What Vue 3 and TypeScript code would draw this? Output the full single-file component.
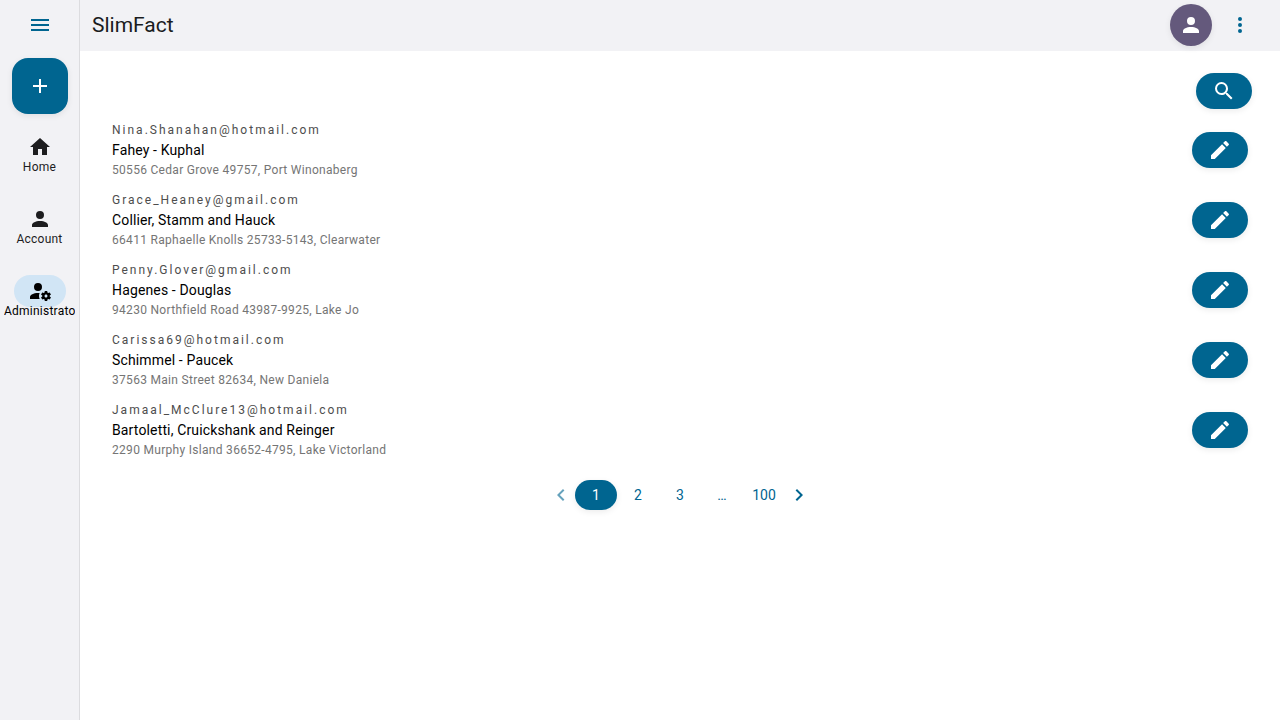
<script setup lang="ts">
import { ref } from 'vue'

interface NavItem {
  label: string
  icon: string
  active?: boolean
}

interface Company {
  email: string
  name: string
  address: string
}

const icons = {
  menu: 'M3,6H21V8H3V6M3,11H21V13H3V11M3,16H21V18H3V16Z',
  plus: 'M19,13H13V19H11V13H5V11H11V5H13V11H19V13Z',
  home: 'M10,20V14H14V20H19V12H22L12,3L2,12H5V20H10Z',
  account:
    'M12,4A4,4 0 0,1 16,8A4,4 0 0,1 12,12A4,4 0 0,1 8,8A4,4 0 0,1 12,4M12,14C16.42,14 20,15.79 20,18V20H4V18C4,15.79 7.58,14 12,14Z',
  accountCog:
    'M10 4A4 4 0 0 0 6 8A4 4 0 0 0 10 12A4 4 0 0 0 14 8A4 4 0 0 0 10 4M17 12C16.87 12 16.76 12.09 16.74 12.21L16.55 13.53C16.25 13.66 15.96 13.82 15.7 14L14.46 13.5C14.35 13.5 14.22 13.5 14.15 13.63L13.15 15.36C13.09 15.47 13.11 15.6 13.21 15.68L14.27 16.5C14.25 16.67 14.24 16.83 14.24 17C14.24 17.17 14.25 17.33 14.27 17.5L13.21 18.32C13.12 18.4 13.09 18.53 13.15 18.64L14.15 20.37C14.21 20.5 14.34 20.5 14.46 20.5L15.7 20C15.96 20.18 16.24 20.35 16.55 20.47L16.74 21.79C16.76 21.91 16.86 22 17 22H19C19.11 22 19.22 21.91 19.24 21.79L19.43 20.47C19.73 20.34 20 20.18 20.27 20L21.5 20.5C21.63 20.5 21.76 20.5 21.83 20.37L22.83 18.64C22.89 18.53 22.86 18.4 22.77 18.32L21.7 17.5C21.72 17.33 21.74 17.17 21.74 17C21.74 16.83 21.73 16.67 21.7 16.5L22.76 15.68C22.85 15.6 22.88 15.47 22.82 15.36L21.82 13.63C21.76 13.5 21.63 13.5 21.5 13.5L20.27 14C20 13.82 19.73 13.65 19.42 13.53L19.23 12.21C19.22 12.09 19.11 12 19 12H17M10 14C5.58 14 2 15.79 2 18V20H11.68A7 7 0 0 1 11 17A7 7 0 0 1 11.64 14.09C11.11 14.03 10.56 14 10 14M18 15.5C18.83 15.5 19.5 16.17 19.5 17C19.5 17.83 18.83 18.5 18 18.5C17.16 18.5 16.5 17.83 16.5 17C16.5 16.17 17.17 15.5 18 15.5Z',
  dots: 'M12,16A2,2 0 0,1 14,18A2,2 0 0,1 12,20A2,2 0 0,1 10,18A2,2 0 0,1 12,16M12,10A2,2 0 0,1 14,12A2,2 0 0,1 12,14A2,2 0 0,1 10,12A2,2 0 0,1 12,10M12,4A2,2 0 0,1 14,6A2,2 0 0,1 12,8A2,2 0 0,1 10,6A2,2 0 0,1 12,4Z',
  magnify:
    'M9.5,3A6.5,6.5 0 0,1 16,9.5C16,11.11 15.41,12.59 14.44,13.73L14.71,14H15.5L20.5,19L19,20.5L14,15.5V14.71L13.73,14.44C12.59,15.41 11.11,16 9.5,16A6.5,6.5 0 0,1 3,9.5A6.5,6.5 0 0,1 9.5,3M9.5,5C7,5 5,7 5,9.5C5,12 7,14 9.5,14C12,14 14,12 14,9.5C14,7 12,5 9.5,5Z',
  pencil:
    'M20.71,7.04C21.1,6.65 21.1,6 20.71,5.63L18.37,3.29C18,2.9 17.35,2.9 16.96,3.29L15.12,5.12L18.87,8.87M3,17.25V21H6.75L17.81,9.93L14.06,6.18L3,17.25Z',
  left: 'M15.41,16.58L10.83,12L15.41,7.41L14,6L8,12L14,18L15.41,16.58Z',
  right: 'M8.59,16.58L13.17,12L8.59,7.41L10,6L16,12L10,18L8.59,16.58Z',
}

const navItems: NavItem[] = [
  { label: 'Home', icon: icons.home },
  { label: 'Account', icon: icons.account },
  { label: 'Administrator', icon: icons.accountCog, active: true },
]

const companies: Company[] = [
  { email: 'Nina.Shanahan@hotmail.com', name: 'Fahey - Kuphal', address: '50556 Cedar Grove 49757, Port Winonaberg' },
  { email: 'Grace_Heaney@gmail.com', name: 'Collier, Stamm and Hauck', address: '66411 Raphaelle Knolls 25733-5143, Clearwater' },
  { email: 'Penny.Glover@gmail.com', name: 'Hagenes - Douglas', address: '94230 Northfield Road 43987-9925, Lake Jo' },
  { email: 'Carissa69@hotmail.com', name: 'Schimmel - Paucek', address: '37563 Main Street 82634, New Daniela' },
  { email: 'Jamaal_McClure13@hotmail.com', name: 'Bartoletti, Cruickshank and Reinger', address: '2290 Murphy Island 36652-4795, Lake Victorland' },
]

const lastPage = 100
const pages: (number | '…')[] = [1, 2, 3, '…', lastPage]
const page = ref(1)

function goTo(target: number | '…') {
  page.value = target === '…' ? 4 : target
}
</script>

<template>
  <div class="layout">
    <aside class="rail">
      <button class="icon-btn menu-btn" type="button" aria-label="Menu">
        <svg viewBox="0 0 24 24"><path :d="icons.menu" /></svg>
      </button>
      <button class="fab" type="button" aria-label="Add">
        <svg viewBox="0 0 24 24"><path :d="icons.plus" /></svg>
      </button>
      <nav class="nav">
        <a
          v-for="item in navItems"
          :key="item.label"
          href="#"
          class="nav-item"
          :class="{ active: item.active }"
        >
          <span class="nav-pill">
            <svg viewBox="0 0 24 24"><path :d="item.icon" /></svg>
          </span>
          <span class="nav-label">{{ item.label }}</span>
        </a>
      </nav>
    </aside>

    <div class="content">
      <header class="toolbar">
        <h1 class="title">SlimFact</h1>
        <button class="avatar" type="button" aria-label="Profile">
          <svg viewBox="0 0 24 24"><path :d="icons.account" /></svg>
        </button>
        <button class="icon-btn" type="button" aria-label="More">
          <svg viewBox="0 0 24 24"><path :d="icons.dots" /></svg>
        </button>
      </header>

      <main class="page">
        <div class="actions">
          <button class="pill-btn" type="button" aria-label="Search">
            <svg viewBox="0 0 24 24"><path :d="icons.magnify" /></svg>
          </button>
        </div>

        <ul class="list">
          <li v-for="company in companies" :key="company.email" class="row">
            <div class="row-text">
              <span class="overline">{{ company.email }}</span>
              <span class="name">{{ company.name }}</span>
              <span class="caption">{{ company.address }}</span>
            </div>
            <button class="pill-btn" type="button" :aria-label="`Edit ${company.name}`">
              <svg viewBox="0 0 24 24"><path :d="icons.pencil" /></svg>
            </button>
          </li>
        </ul>

        <nav class="pagination" aria-label="Pagination">
          <button class="arrow" type="button" aria-label="Previous page" :disabled="page === 1" @click="goTo(page - 1)">
            <svg viewBox="0 0 24 24"><path :d="icons.left" /></svg>
          </button>
          <button
            v-for="entry in pages"
            :key="entry"
            class="page-btn"
            :class="{ current: entry === page }"
            type="button"
            @click="goTo(entry)"
          >{{ entry }}</button>
          <button class="arrow" type="button" aria-label="Next page" :disabled="page === lastPage" @click="goTo(page + 1)">
            <svg viewBox="0 0 24 24"><path :d="icons.right" /></svg>
          </button>
        </nav>
      </main>
    </div>
  </div>
</template>

<style>
body {
  margin: 0;
  background: #fff;
}
</style>

<style scoped>
.layout {
  --primary: #006590;
  --surface: #f2f2f5;
  --shadow: 0 2px 6px rgba(0, 0, 0, 0.08);
  display: flex;
  min-height: 100vh;
  font-family: Roboto, "Liberation Sans", sans-serif;
  font-size: 14px;
  line-height: 20px;
  letter-spacing: 0.01em;
  color: #000;
}

svg {
  display: block;
  width: 24px;
  height: 24px;
  fill: currentColor;
}

button {
  display: flex;
  align-items: center;
  justify-content: center;
  box-sizing: border-box;
  padding: 0;
  border: 0;
  background: none;
  font: inherit;
  color: var(--primary);
  cursor: pointer;
}

.rail {
  display: flex;
  flex: none;
  flex-direction: column;
  align-items: center;
  box-sizing: border-box;
  width: 80px;
  background: var(--surface);
  border-right: 1px solid #dcdcdf;
}

.icon-btn {
  width: 40px;
  height: 40px;
  border-radius: 50%;
}

.menu-btn {
  margin: 5px 0 13px;
}

.fab {
  width: 56px;
  height: 56px;
  border-radius: 16px;
  background: var(--primary);
  box-shadow: var(--shadow);
  color: #fff;
}

.nav {
  display: flex;
  flex-direction: column;
  gap: 28px;
  width: 100%;
  margin-top: 17px;
}

.nav-item {
  display: flex;
  flex-direction: column;
  align-items: center;
  padding: 0 4px;
  color: #1d1d1f;
  text-decoration: none;
}

.nav-pill {
  display: flex;
  align-items: center;
  justify-content: center;
  width: 52px;
  height: 32px;
  border-radius: 16px;
}

.nav-label {
  max-width: 100%;
  margin-top: -4px;
  overflow: hidden;
  font-size: 12px;
  line-height: 16px;
  letter-spacing: 0.02em;
  white-space: nowrap;
}

.active {
  color: #000;
}

.active .nav-pill {
  background: #d1e5f5;
}

.content {
  display: flex;
  flex: 1;
  flex-direction: column;
  min-width: 0;
}

.toolbar {
  display: flex;
  align-items: center;
  gap: 8px;
  min-height: 51px;
  box-sizing: border-box;
  padding: 0 20px 1px 12px;
  background: var(--surface);
}

.title {
  flex: 1;
  margin: 0;
  font-size: 21px;
  font-weight: 400;
  line-height: 32px;
  letter-spacing: normal;
  color: #1a1c1e;
}

.avatar {
  width: 42px;
  height: 42px;
  border-radius: 50%;
  background: #64597c;
  box-shadow: var(--shadow);
  color: #fff;
}

.page {
  padding: 22px 16px;
}

.actions {
  display: flex;
  justify-content: flex-end;
  padding-right: 12px;
}

.pill-btn {
  flex: none;
  width: 56px;
  height: 36px;
  border-radius: 18px;
  background: var(--primary);
  box-shadow: var(--shadow);
  color: #fff;
}

.list {
  margin: 6px 0 0;
  padding: 0;
  list-style: none;
}

.row {
  display: flex;
  align-items: center;
  justify-content: space-between;
  gap: 16px;
  min-height: 70px;
  box-sizing: border-box;
  padding: 0 16px;
}

.row-text {
  display: flex;
  flex-direction: column;
  gap: 2px;
  min-width: 0;
}

.overline,
.caption {
  font-size: 12px;
  line-height: 16px;
}

.overline {
  letter-spacing: 2px;
  color: #4d4d4d;
}

.caption {
  letter-spacing: 0.025em;
  color: #757575;
}

.pagination {
  display: flex;
  align-items: center;
  justify-content: center;
  margin-top: 15px;
}

.arrow {
  width: 28px;
  height: 30px;
}

.arrow:disabled {
  opacity: 0.6;
  cursor: default;
}

.page-btn {
  min-width: 42px;
  height: 30px;
  border-radius: 15px;
}

.page-btn.current {
  background: var(--primary);
  box-shadow: var(--shadow);
  color: #fff;
}
</style>
